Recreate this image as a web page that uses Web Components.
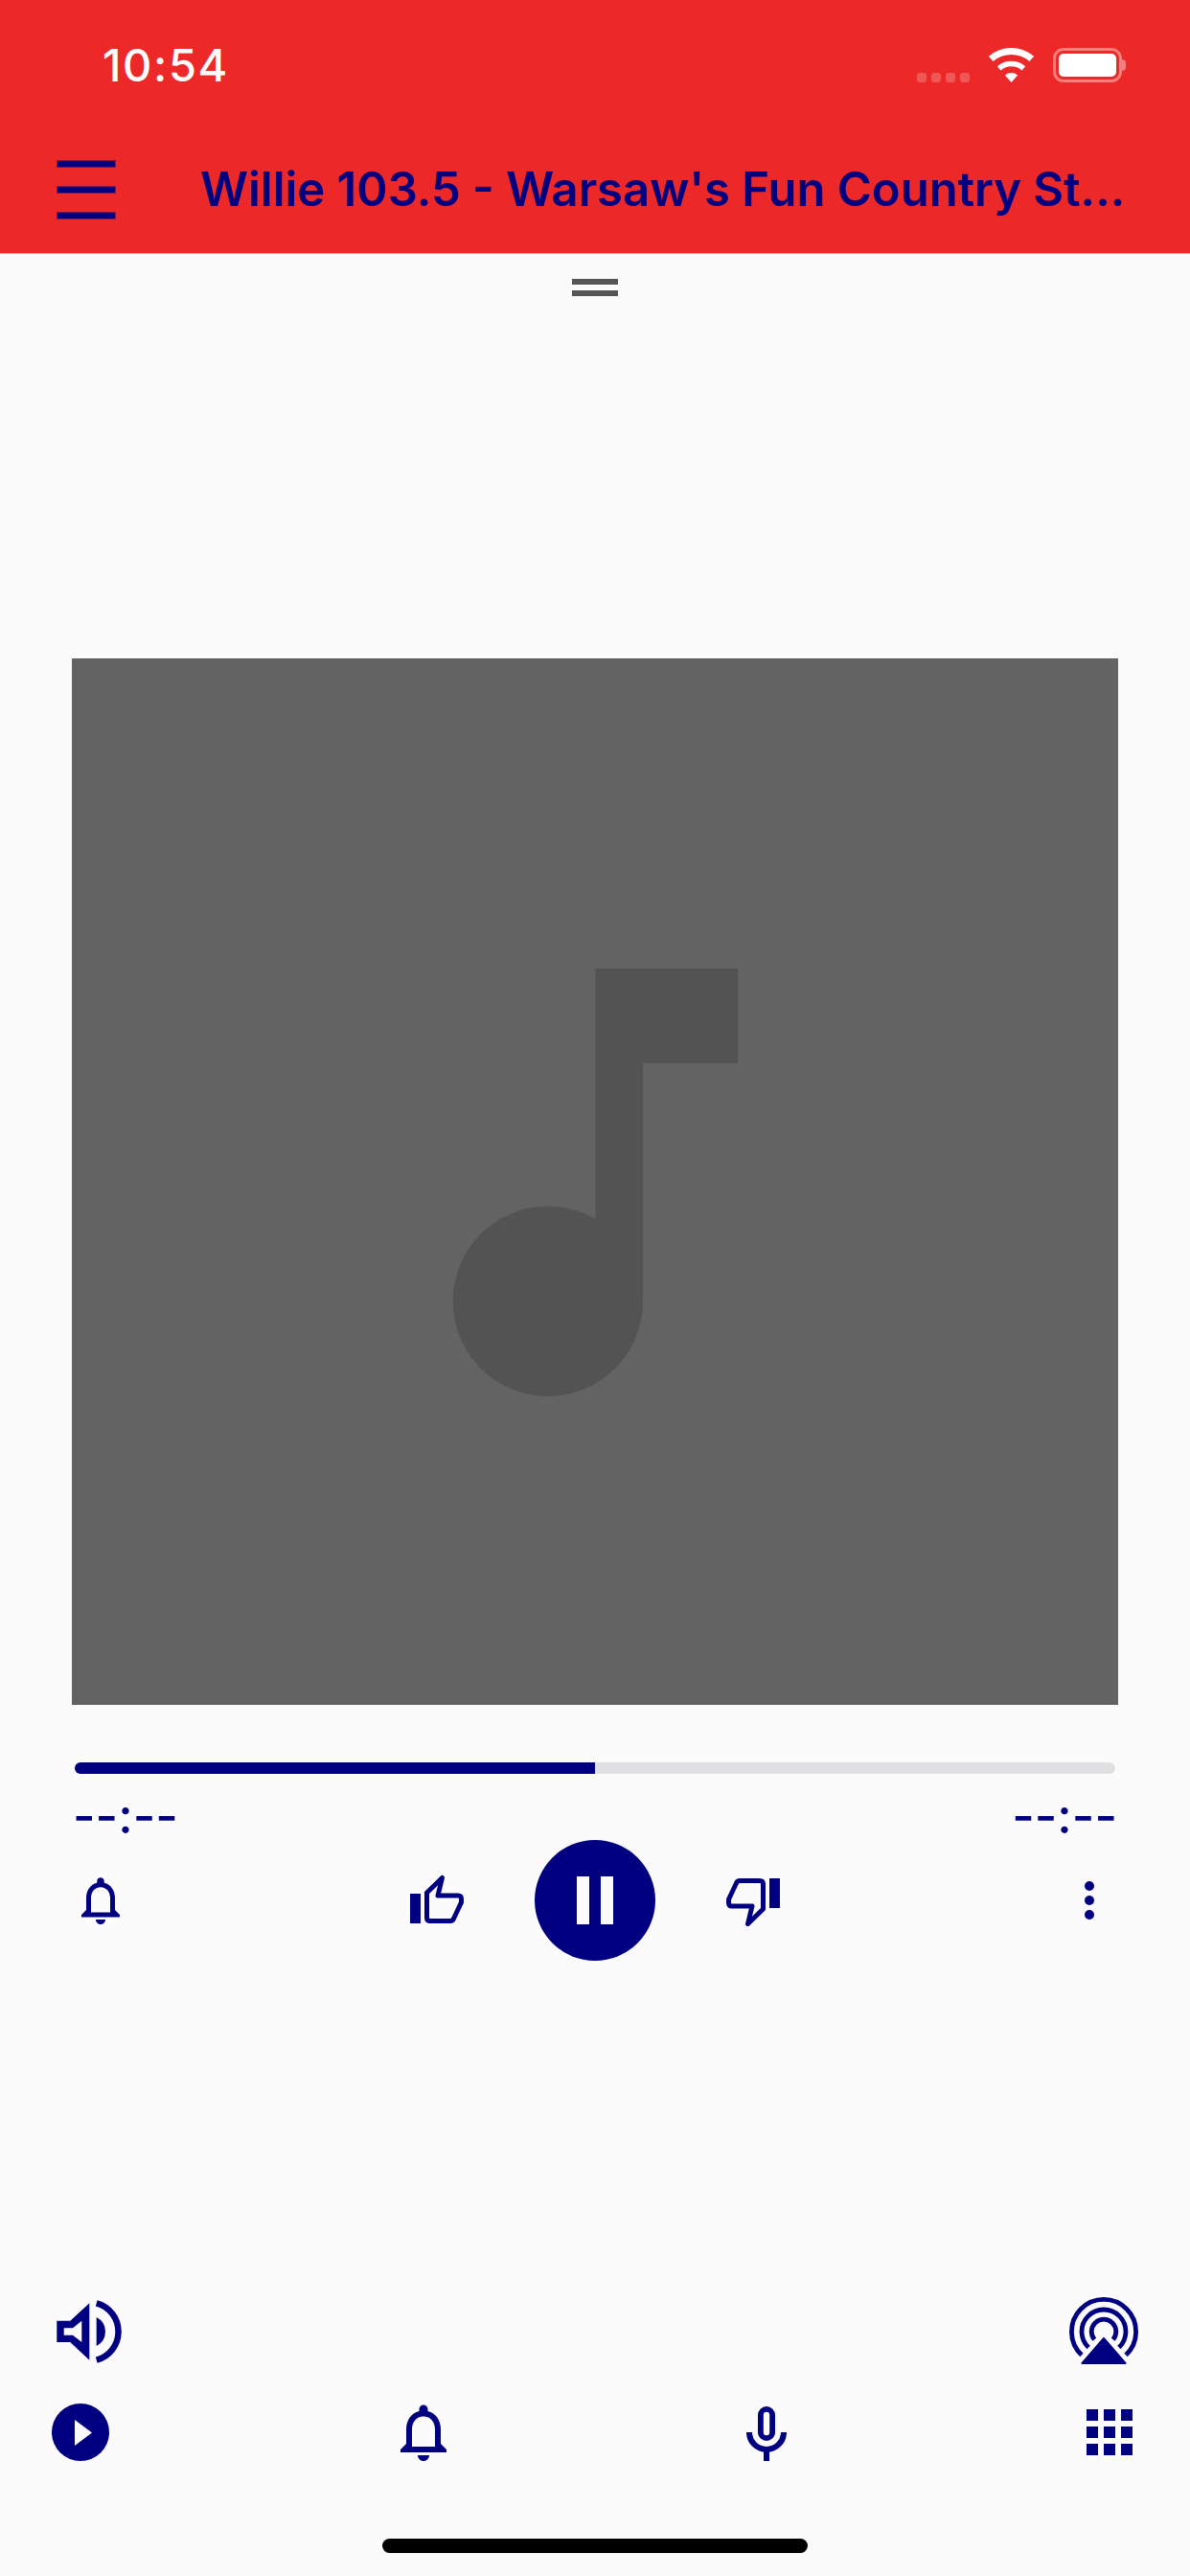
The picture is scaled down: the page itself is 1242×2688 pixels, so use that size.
<!DOCTYPE html>
<html lang="en">
<head>
<meta charset="utf-8">
<title>Willie 103.5</title>
<style>
html, body { margin: 0; padding: 0; }
body {
    width: 1242px;
    height: 2688px;
    overflow: hidden;
    display: flex;
    flex-direction: column;
    background: #fbfbfc;
    font-family: Inter, "Liberation Sans", sans-serif;
}
</style>
</head>
<body>
<status-bar>10:54</status-bar>
<app-toolbar>Willie 103.5 - Warsaw's Fun Country St...</app-toolbar>
<now-playing>
    <time-row>
        <span slot="start">--:--</span>
        <span slot="end">--:--</span>
    </time-row>
    <transport-row></transport-row>
</now-playing>
<bottom-bar></bottom-bar>
<home-indicator></home-indicator>

<script>
const NAVY = "#000080";
const ICONS = {
    bell: {
        box: "0 0 24 24",
        body: `<path fill="currentColor" d="M12 22c1.1 0 2-.9 2-2h-4c0 1.1.9 2 2 2zm6-6v-5c0-3.07-1.63-5.64-4.5-6.32V4c0-.83-.67-1.5-1.5-1.5s-1.5.67-1.5 1.5v.68C7.64 5.36 6 7.92 6 11v5l-2 2v1h16v-1l-2-2zm-2 1H8v-6c0-2.48 1.51-4.5 4-4.5s4 2.02 4 4.5v6z"/>`
    },
    thumb: {
        box: "0 0 56 51",
        body: `<rect x="0" y="20" width="11" height="31" fill="currentColor"/>
            <path fill="none" stroke="currentColor" stroke-width="5" stroke-linejoin="round" d="M17.5 19 L33.5 3.5 L29 22 H50 Q53.5 22 53.5 25.5 V29 L45.5 46 Q44.5 48.5 42 48.5 H21 Q17.5 48.5 17.5 45 Z"/>`
    },
    note: {
        box: "0 0 24 24",
        body: `<path fill="currentColor" d="M12 3v10.55A4 4 0 1 0 14 17V7h4V3h-6z"/>`
    },
    speaker: {
        box: "0 0 68 66",
        body: `<path fill="currentColor" fill-rule="evenodd" d="M0.3 21.7H14.3L34.3 3.3V62.7L14.3 44H0.3Z M7.7 29.3V36.7H17L26.3 44V21.7L17 29.3Z"/>
            <path fill="currentColor" d="M41.7 18A16.8 16.8 0 0 1 41.7 48Z"/>
            <path fill="none" stroke="currentColor" stroke-width="6.5" d="M41.7 3.4A30.6 30.6 0 0 1 41.7 62.6"/>`
    },
    airplay: {
        box: "0 0 72 70",
        body: `<g fill="none" stroke="currentColor" stroke-width="4.8">
                <path d="M12.9 60.4A33.6 33.6 0 1 1 59.1 60.4"/>
                <path d="M20.1 52.6A23 23 0 1 1 51.9 52.6"/>
                <path d="M26.3 44.3A12.8 12.8 0 1 1 45.7 44.3"/>
            </g>
            <path fill="currentColor" stroke="currentColor" stroke-width="2" stroke-linejoin="round" d="M36 43L58.5 69H13.5Z"/>`
    },
    mic: {
        box: "0 0 42 57",
        body: `<rect x="14.9" y="2.9" width="12.2" height="30.2" rx="6.1" fill="none" stroke="currentColor" stroke-width="5.8"/>
            <path fill="none" stroke="currentColor" stroke-width="6" d="M3 27A18 18 0 0 0 39 27"/>
            <rect x="18" y="46" width="6" height="11" fill="currentColor"/>`
    },
    wifi: {
        box: "0 0 47 36",
        body: `<g fill="currentColor">
                <path d="M-0.1 8.8A36 36 0 0 1 47.1 8.8L42.5 14.1A29 29 0 0 0 4.5 14.1Z"/>
                <path d="M8.9 19.2A22.3 22.3 0 0 1 38.1 19.2L34.5 23.4A16.7 16.7 0 0 0 12.5 23.4Z"/>
                <path d="M16.9 28.4A10 10 0 0 1 30.1 28.4L23.5 36Z"/>
            </g>`
    }
};

class AppIcon extends HTMLElement {
    constructor() {
        super();
        let icon = ICONS[this.getAttribute("name")];
        let width = this.getAttribute("width");
        let height = this.getAttribute("height") || width;
        this.attachShadow({ mode: "open" }).innerHTML = `
            <style>
                :host { display: block; flex: none; color: ${NAVY}; width: ${width}px; height: ${height}px; }
                svg { display: block; width: 100%; height: 100%; overflow: visible; }
            </style>
            <svg viewBox="${icon.box}" aria-hidden="true">${icon.body}</svg>`;
    }
}

class StatusBar extends HTMLElement {
    constructor() {
        super();
        this.attachShadow({ mode: "open" }).innerHTML = `
            <style>
                :host {
                    display: flex; flex: none; align-items: center; justify-content: space-between;
                    box-sizing: border-box; height: 132px; padding: 3px 64px 0 107px;
                    background: #ec2828; color: #fff;
                    font: 500 47px/56px Inter, "Liberation Sans", sans-serif;
                    letter-spacing: 1.6px;
                }
                .icons { display: flex; align-items: flex-end; gap: 20px; height: 36px; }
                .dots { display: flex; gap: 5px; }
                .dots i { width: 10px; height: 10px; border-radius: 3px; background: rgba(255,255,255,.22); }
                .battery {
                    position: relative; box-sizing: border-box; width: 72px; height: 36px; padding: 3px;
                    border: 3px solid rgba(255,255,255,.4); border-radius: 11px; margin-right: 7px;
                }
                .battery b { display: block; height: 100%; border-radius: 5px; background: #fff; }
                .battery::after {
                    content: ""; position: absolute; left: 72px; top: 9px; width: 4px; height: 12px;
                    margin-left: -3px; border-radius: 0 4px 4px 0; background: rgba(255,255,255,.4);
                }
            </style>
            <slot></slot>
            <div class="icons">
                <div class="dots"><i></i><i></i><i></i><i></i></div>
                <app-icon name="wifi" width="47" height="36" style="color:#fff"></app-icon>
                <div class="battery"><b></b></div>
            </div>`;
    }
}

class AppToolbar extends HTMLElement {
    constructor() {
        super();
        this.attachShadow({ mode: "open" }).innerHTML = `
            <style>
                :host {
                    display: flex; flex: none; align-items: center; gap: 89px;
                    box-sizing: border-box; height: 133px; padding: 0 60px 1px;
                    background: #ec2828; color: ${NAVY};
                    border-bottom: 1px solid #b4b4b4;
                    font: 600 49px/60px Inter, "Liberation Sans", sans-serif;
                }
                .menu { display: flex; flex: none; flex-direction: column; gap: 21px; width: 60px; }
                .menu i { height: 6px; background: ${NAVY}; box-shadow: 0 0 0 1px rgba(0,0,128,.45); }
                .title { white-space: nowrap; overflow: hidden; }
            </style>
            <div class="menu"><i></i><i></i><i></i></div>
            <div class="title"><slot></slot></div>`;
    }
}

class ArtWork extends HTMLElement {
    constructor() {
        super();
        this.attachShadow({ mode: "open" }).innerHTML = `
            <style>
                :host {
                    display: flex; flex: none; align-items: center; justify-content: center;
                    width: 1092px; height: 1092px; background: #636363;
                }
            </style>
            <app-icon name="note" width="595" style="color:#535353"></app-icon>`;
    }
}

class ProgressBar extends HTMLElement {
    constructor() {
        super();
        this.attachShadow({ mode: "open" }).innerHTML = `
            <style>
                :host {
                    display: block; flex: none; width: 1086px; height: 12px;
                    border-radius: 6px; overflow: hidden; background: #e0e0e2;
                }
                div { width: 50%; height: 100%; background: ${NAVY}; }
            </style>
            <div></div>`;
    }
}

class TimeRow extends HTMLElement {
    constructor() {
        super();
        this.attachShadow({ mode: "open" }).innerHTML = `
            <style>
                :host {
                    display: flex; flex: none; justify-content: space-between;
                    box-sizing: border-box; width: 1090px; height: 69px; padding-top: 21px;
                    color: ${NAVY}; font: 500 51px/46px Inter, "Liberation Sans", sans-serif;
                }
            </style>
            <slot name="start"></slot>
            <slot name="end"></slot>`;
    }
}

class TransportRow extends HTMLElement {
    constructor() {
        super();
        this.attachShadow({ mode: "open" }).innerHTML = `
            <style>
                :host {
                    display: grid; flex: none; grid-template-columns: 1fr auto 1fr; align-items: center;
                    width: 1242px; height: 126px;
                }
                .start { padding-left: 75px; }
                .end { display: flex; flex-direction: column; align-items: flex-end; gap: 5px; padding-right: 100px; }
                .end i { width: 10px; height: 10px; border-radius: 50%; background: ${NAVY}; }
                .middle { display: flex; align-items: center; gap: 74px; }
                .up { margin-bottom: 4px; }
                .down { margin-top: 5px; transform: rotate(180deg); }
                .pause {
                    display: flex; justify-content: center; gap: 12px; align-items: center;
                    width: 126px; height: 126px; border-radius: 50%; background: ${NAVY};
                }
                .pause i { width: 13px; height: 50px; background: #fbfbfc; }
            </style>
            <div class="start"><app-icon name="bell" width="60"></app-icon></div>
            <div class="middle">
                <app-icon class="up" name="thumb" width="56" height="51"></app-icon>
                <div class="pause"><i></i><i></i></div>
                <app-icon class="down" name="thumb" width="56" height="51"></app-icon>
            </div>
            <div class="end"><i></i><i></i><i></i></div>`;
    }
}

class NowPlaying extends HTMLElement {
    constructor() {
        super();
        this.attachShadow({ mode: "open" }).innerHTML = `
            <style>
                :host {
                    display: flex; flex: none; flex-direction: column; align-items: center;
                    padding-top: 26px;
                }
                .grabber { display: flex; flex-direction: column; gap: 6px; margin-bottom: 378px; }
                .grabber i { width: 48px; height: 6px; background: #555; }
                progress-bar { margin-top: 60px; }
            </style>
            <div class="grabber"><i></i><i></i></div>
            <art-work></art-work>
            <progress-bar></progress-bar>
            <slot></slot>`;
    }
}

class BottomBar extends HTMLElement {
    constructor() {
        super();
        this.attachShadow({ mode: "open" }).innerHTML = `
            <style>
                :host { display: flex; flex-direction: column; flex: none; margin-top: auto; gap: 41px; }
                .top { display: flex; justify-content: space-between; align-items: center; padding: 0 54px 0 59px; height: 70px; }
                .top app-icon:first-child { margin-top: 2px; }
                .tabs { display: flex; justify-content: space-between; padding: 0 54px; height: 60px; }
                .cell { display: flex; align-items: center; justify-content: center; width: 60px; height: 60px; }
                .cell app-icon[name="mic"] { margin-top: 3px; }
                .play {
                    display: flex; align-items: center; justify-content: center;
                    width: 60px; height: 60px; border-radius: 50%; background: ${NAVY};
                }
                .play svg { display: block; width: 60px; height: 60px; }
                .apps { display: grid; grid-template-columns: repeat(3, 12px); gap: 6px; }
                .apps i { width: 12px; height: 12px; background: ${NAVY}; }
            </style>
            <div class="top">
                <app-icon name="speaker" width="68" height="66"></app-icon>
                <app-icon name="airplay" width="72" height="70"></app-icon>
            </div>
            <div class="tabs">
                <div class="cell"><div class="play"><svg viewBox="0 0 60 60"><path fill="#fbfbfc" d="M24 17V44L42 30.5Z"/></svg></div></div>
                <div class="cell"><app-icon name="bell" width="72"></app-icon></div>
                <div class="cell"><app-icon name="mic" width="42" height="57"></app-icon></div>
                <div class="cell"><div class="apps"><i></i><i></i><i></i><i></i><i></i><i></i><i></i><i></i><i></i></div></div>
            </div>`;
    }
}

class HomeIndicator extends HTMLElement {
    constructor() {
        super();
        this.attachShadow({ mode: "open" }).innerHTML = `
            <style>
                :host { display: flex; flex: none; justify-content: center; padding: 81px 0 24px; }
                div { width: 444px; height: 15px; border-radius: 8px; background: #000; }
            </style>
            <div></div>`;
    }
}

customElements.define("app-icon", AppIcon);
customElements.define("status-bar", StatusBar);
customElements.define("app-toolbar", AppToolbar);
customElements.define("art-work", ArtWork);
customElements.define("progress-bar", ProgressBar);
customElements.define("time-row", TimeRow);
customElements.define("transport-row", TransportRow);
customElements.define("now-playing", NowPlaying);
customElements.define("bottom-bar", BottomBar);
customElements.define("home-indicator", HomeIndicator);
</script>
</body>
</html>
